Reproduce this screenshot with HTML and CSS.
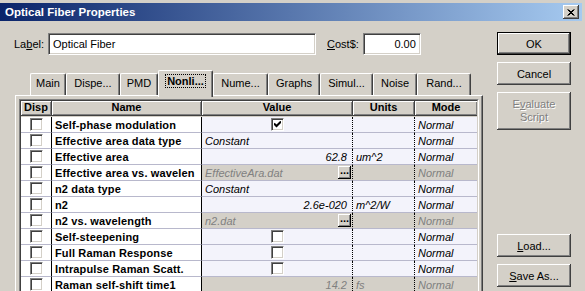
FILE: index.html
```html
<!DOCTYPE html>
<html lang="en">
<head>
    <meta charset="UTF-8">
    <title>Optical Fiber Properties</title>
    <link rel="stylesheet" href="styles.css">
</head>
<body>
    <div class="titlebar">
        <span class="caption">Optical Fiber Properties</span>
        <span class="close">
            <svg width="8" height="7" viewBox="0 0 8 7"><path d="M0.5 0.5L6.5 6.5M1.5 0.5L7.5 6.5M6.5 0.5L0.5 6.5M7.5 0.5L1.5 6.5" stroke="#000" stroke-width="1"/></svg>
        </span>
    </div>

    <div class="client">
        <div class="main">
            <div class="fields">
                <span class="lbl">La<u>b</u>el:</span>
                <div class="edit name-edit">Optical Fiber</div>
                <span class="lbl cost"><u>C</u>ost$:</span>
                <div class="edit cost-edit">0.00</div>
            </div>

            <div class="tabs">
                <div class="tab" style="width:36px">Main</div>
                <div class="tab" style="width:54px">Dispe...</div>
                <div class="tab" style="width:38px">PMD</div>
                <div class="tab active" style="width:55px"><span>Nonli...</span></div>
                <div class="tab" style="width:55px">Nume...</div>
                <div class="tab" style="width:52px">Graphs</div>
                <div class="tab" style="width:53px">Simul...</div>
                <div class="tab" style="width:44px">Noise</div>
                <div class="tab" style="width:54px">Rand...</div>
            </div>

            <div class="panel">
                <div class="frame">
                    <div class="grid">
                        <div class="hd">Disp</div>
                        <div class="hd">Name</div>
                        <div class="hd">Value</div>
                        <div class="hd">Units</div>
                        <div class="hd last">Mode</div>

                        <div class="c disp"><span class="cb"></span></div>
                        <div class="c name">Self-phase modulation</div>
                        <div class="c val center"><span class="cb checked"><svg width="7" height="7" viewBox="0 0 7 7"><path d="M0 2.5L2.5 5L7 0.5" fill="none" stroke="#000" stroke-width="2"/></svg></span></div>
                        <div class="c unit"></div>
                        <div class="c mode">Normal</div>

                        <div class="c disp"><span class="cb"></span></div>
                        <div class="c name">Effective area data type</div>
                        <div class="c val">Constant</div>
                        <div class="c unit"></div>
                        <div class="c mode">Normal</div>

                        <div class="c disp"><span class="cb"></span></div>
                        <div class="c name">Effective area</div>
                        <div class="c val num">62.8</div>
                        <div class="c unit">um^2</div>
                        <div class="c mode">Normal</div>

                        <div class="c disp"><span class="cb"></span></div>
                        <div class="c name">Effective area vs. wavelen</div>
                        <div class="c val off"><span class="txt">EffectiveAra.dat</span><span class="dots">...</span></div>
                        <div class="c unit off"></div>
                        <div class="c mode off">Normal</div>

                        <div class="c disp"><span class="cb"></span></div>
                        <div class="c name">n2 data type</div>
                        <div class="c val">Constant</div>
                        <div class="c unit"></div>
                        <div class="c mode">Normal</div>

                        <div class="c disp"><span class="cb"></span></div>
                        <div class="c name">n2</div>
                        <div class="c val num">2.6e-020</div>
                        <div class="c unit">m^2/W</div>
                        <div class="c mode">Normal</div>

                        <div class="c disp"><span class="cb"></span></div>
                        <div class="c name">n2 vs. wavelength</div>
                        <div class="c val off"><span class="txt">n2.dat</span><span class="dots">...</span></div>
                        <div class="c unit off"></div>
                        <div class="c mode off">Normal</div>

                        <div class="c disp"><span class="cb"></span></div>
                        <div class="c name">Self-steepening</div>
                        <div class="c val center"><span class="cb"></span></div>
                        <div class="c unit"></div>
                        <div class="c mode">Normal</div>

                        <div class="c disp"><span class="cb"></span></div>
                        <div class="c name">Full Raman Response</div>
                        <div class="c val center"><span class="cb"></span></div>
                        <div class="c unit"></div>
                        <div class="c mode">Normal</div>

                        <div class="c disp"><span class="cb"></span></div>
                        <div class="c name">Intrapulse Raman Scatt.</div>
                        <div class="c val center"><span class="cb"></span></div>
                        <div class="c unit"></div>
                        <div class="c mode">Normal</div>

                        <div class="c disp"><span class="cb"></span></div>
                        <div class="c name">Raman self-shift time1</div>
                        <div class="c val num off">14.2</div>
                        <div class="c unit off">fs</div>
                        <div class="c mode off">Normal</div>
                    </div>
                </div>
            </div>
        </div>

        <div class="side">
            <div class="btn default">OK</div>
            <div class="btn">Cancel</div>
            <div class="btn tall disabled"><span>E<u>v</u>aluate<br>Script</span></div>
            <div class="btn load"><u>L</u>oad...</div>
            <div class="btn"><u>S</u>ave As...</div>
        </div>
    </div>
</body>
</html>
```

FILE: styles.css
```css
body {
    margin: 0;
    background: #d4d0c8;
    font: 11px "Liberation Sans", Arial, sans-serif;
    color: #000;
    overflow: hidden;
}
.titlebar {
    display: flex;
    align-items: center;
    justify-content: space-between;
    height: 18px;
    margin: 3px 3px 0 0;
    padding: 0 3px 0 5px;
    background: linear-gradient(to right, #0a246a, #a6caf0);
}
.caption {
    color: #fff;
    font-weight: bold;
    font-size: 11.5px;
}
.close {
    display: flex;
    align-items: center;
    justify-content: center;
    width: 16px;
    height: 14px;
    background: #d4d0c8;
    box-shadow: inset -1px -1px #404040, inset 1px 1px #fff, inset -2px -2px #808080;
}
.client {
    display: flex;
}
.main {
    width: 469px;
    padding-left: 14px;
}
/* label / cost row */
.fields {
    display: flex;
    align-items: center;
    height: 22px;
    margin-top: 12px;
}
.cost {
    margin-left: 11px;
}
.edit {
    box-sizing: border-box;
    height: 22px;
    margin-left: 4px;
    padding: 0 4px;
    line-height: 20px;
    background: #fff;
    border: 1px solid;
    border-color: #808080 #fff #fff #808080;
    box-shadow: inset 1px 1px #404040, inset -1px -1px #d4d0c8;
}
.name-edit {
    width: 268px;
}
.cost-edit {
    width: 58px;
    text-align: right;
}
/* tabs */
.tabs {
    display: flex;
    align-items: flex-end;
    height: 25px;
    margin: 15px 0 0 16px;
}
.tab {
    box-sizing: border-box;
    height: 22px;
    padding-top: 3px;
    text-align: center;
    white-space: nowrap;
    overflow: hidden;
    border-top: 1px solid #fff;
    border-left: 1px solid #fff;
    border-right: 1px solid #404040;
    border-radius: 2px 2px 0 0;
    box-shadow: inset -1px 0 #808080;
}
.tab.active {
    position: relative;
    z-index: 1;
    height: 27px;
    margin-bottom: -2px;
    padding-top: 4px;
    font-weight: bold;
    background: #d4d0c8;
}
.tab.active span {
    padding: 0 1px;
    outline: 1px dotted #000;
}
.panel {
    box-sizing: border-box;
    width: 468px;
    height: 200px;
    margin-left: 1px;
    padding: 3px 0 0 3px;
    border-top: 1px solid #fff;
    border-left: 1px solid #fff;
    border-right: 1px solid #404040;
    box-shadow: inset -1px 0 #808080;
}
/* property grid */
.frame {
    width: max-content;
    border: 1px solid;
    border-color: #808080 #fff #fff #808080;
}
.grid {
    display: grid;
    grid-template-columns: 31px 150px 151px 62px 62px;
    grid-auto-rows: 16px;
    border: 1px solid;
    border-color: #404040 #d4d0c8 #d4d0c8 #404040;
}
.hd {
    box-sizing: border-box;
    height: 15px;
    line-height: 13px;
    text-align: center;
    font-weight: bold;
    border-right: 1px solid #404040;
    border-bottom: 1px solid #404040;
    box-shadow: inset 1px 1px #fff, inset -1px -1px #808080;
}
.hd.last {
    border-right: 0;
}
.c {
    box-sizing: border-box;
    display: flex;
    align-items: center;
    padding: 0 3px;
    white-space: nowrap;
    overflow: hidden;
    background: #f3f3fb;
    border-bottom: 1px solid #b8b8cc;
    border-right: 1px dotted #000;
}
.disp {
    justify-content: center;
    background: #fff;
    border-right: 1px solid #000;
}
.name {
    font-weight: bold;
    letter-spacing: 0.15px;
    background: #fff;
    border-right: 1px solid #000;
}
.val,
.unit,
.mode {
    font-style: italic;
}
.mode {
    border-right: 0;
}
.center {
    justify-content: center;
}
.num {
    justify-content: flex-end;
    padding-right: 5px;
}
.off {
    color: #808080;
    background: #d4d0c8;
}
.val .txt {
    flex: 1;
}
.dots {
    box-sizing: border-box;
    width: 13px;
    height: 13px;
    margin-right: -2px;
    line-height: 8px;
    text-align: center;
    font-style: normal;
    font-weight: bold;
    color: #000;
    background: #d4d0c8;
    box-shadow: inset -1px -1px #000, inset 1px 1px #fff, inset -2px -2px #808080;
}
.cb {
    box-sizing: border-box;
    display: flex;
    align-items: center;
    justify-content: center;
    width: 13px;
    height: 13px;
    background: #fff;
    border: 1px solid;
    border-color: #808080 #fff #fff #808080;
    box-shadow: inset 1px 1px #404040, inset -1px -1px #d4d0c8;
}
/* buttons */
.side {
    display: flex;
    flex-direction: column;
    width: 74px;
    margin: 11px 0 0 14px;
}
.btn {
    box-sizing: border-box;
    height: 23px;
    margin-bottom: 7px;
    display: flex;
    align-items: center;
    justify-content: center;
    text-align: center;
    box-shadow: inset -1px -1px #404040, inset 1px 1px #fff, inset -2px -2px #808080;
}
.btn.default {
    border: 1px solid #000;
}
.btn.tall {
    height: 38px;
    line-height: 13px;
}
.btn.disabled {
    color: #808080;
    text-shadow: 1px 1px #fff;
}
.btn.load {
    margin-top: 97px;
}
```
